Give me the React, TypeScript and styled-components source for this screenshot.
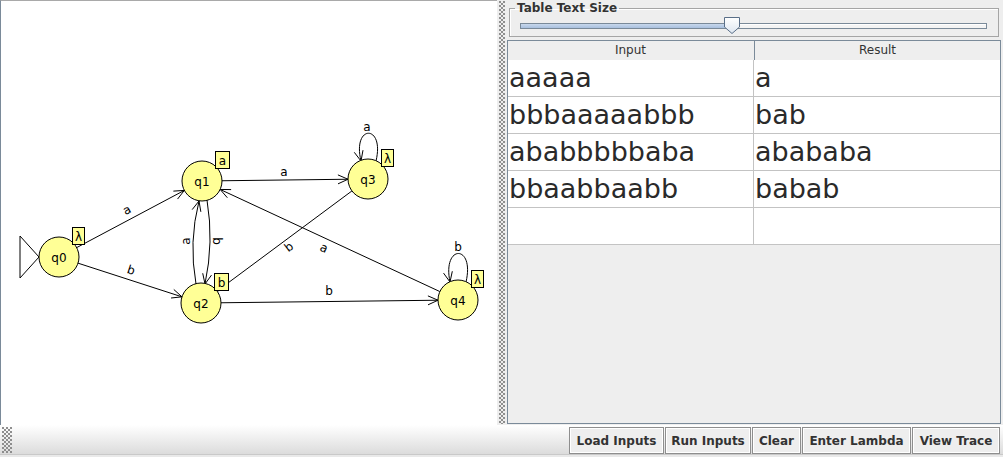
import React from 'react';
import styled, { createGlobalStyle } from 'styled-components';

const GlobalStyle = createGlobalStyle`
  html, body {
    margin: 0;
    padding: 0;
    background: #eeeeee;
  }
`;

const Window = styled.div`
  width: 1003px;
  height: 457px;
  display: flex;
  flex-direction: column;
  overflow: hidden;
  font-family: "DejaVu Sans", "Liberation Sans", sans-serif;
  color: #333333;
`;

const SplitPane = styled.div`
  display: flex;
  height: 425px;
`;

const Canvas = styled.div`
  width: 496px;
  flex: none;
  background: #ffffff;
  border-left: 1px solid #7a8a99;
  border-top: 1px solid #a9a9a9;

  svg {
    display: block;
  }
`;

const Grip = styled.div<{ $w: number }>`
  width: ${({ $w }) => $w}px;
  flex: none;
  background-image:
    radial-gradient(circle at 1px 1px, #8c8c8c 0.7px, transparent 1px),
    radial-gradient(circle at 1px 1px, #8c8c8c 0.7px, transparent 1px);
  background-size: 4px 4px;
  background-position: 0 0, 2px 2px;
`;

const Divider = styled.div`
  width: 9px;
  flex: none;
  display: flex;
  justify-content: center;
  padding: 1px 0;
  box-sizing: border-box;
`;

const RightPanel = styled.div`
  flex: 1;
  display: flex;
  flex-direction: column;
  padding: 0 2px 1px 1px;
  min-width: 0;
`;

const GroupBox = styled.fieldset`
  margin: 1px 2px 0 2px;
  padding: 0 11px 0 10px;
  border: 1px solid #a5a5a5;
  box-shadow: inset 1px 1px 0 #ffffff;
  min-width: 0;
`;

const GroupTitle = styled.legend`
  margin-left: -5px;
  padding: 0 2px;
  font-size: 12px;
  line-height: 14px;
  font-weight: bold;
  color: #333333;
`;

const Slider = styled.div`
  position: relative;
  height: 21px;
`;

const Track = styled.div`
  position: absolute;
  left: 0;
  right: 0;
  top: 8px;
  height: 4px;
  border: 1px solid #7a8a99;
  background: #f4f4f4;
  box-shadow: inset 0 1px 0 #ffffff;
`;

const TrackFill = styled.div`
  height: 100%;
  background: linear-gradient(#c8d8ec, #a9c0de);
`;

const Thumb = styled.svg`
  position: absolute;
  top: 2px;
  width: 16px;
  height: 17px;
`;

const ScrollPane = styled.div`
  margin-top: 3px;
  flex: 1;
  border: 1px solid #7a8a99;
  background: #eeeeee;
  display: flex;
  flex-direction: column;
`;

const TableRow = styled.div<{ $header?: boolean }>`
  display: grid;
  grid-template-columns: 246px 1fr;
  height: ${({ $header }) => ($header ? 19 : 37)}px;
  background: ${({ $header }) => ($header ? '#eeeeee' : '#ffffff')};
  border-bottom: ${({ $header }) => ($header ? 'none' : '1px solid #c3c3c3')};
  box-sizing: border-box;
`;

const HeaderCell = styled.div`
  font-size: 12px;
  line-height: 19px;
  text-align: center;
  color: #333333;
  & + & {
    border-left: 1px solid #7a8a99;
  }
  &:first-child {
    width: 245px;
  }
`;

const Cell = styled.div`
  font-size: 27px;
  line-height: 36px;
  padding-left: 1px;
  white-space: nowrap;
  overflow: hidden;
  color: #2a2a2a;
  &:first-child {
    border-right: 1px solid #c3c3c3;
  }
`;

const ToolBar = styled.div`
  height: 32px;
  box-sizing: border-box;
  display: flex;
  align-items: flex-start;
  gap: 1px;
  padding: 2px 3px 0 2px;
  background: linear-gradient(#ffffff, #dcdcdc 90%);
  box-shadow: inset 0 -2px 0 #e9e9e9, inset 0 -3px 0 #c9c9c9;
`;

const ToolGrip = styled(Grip)`
  height: 26px;
  margin-right: auto;
`;

const Button = styled.button<{ $w: number }>`
  width: ${({ $w }) => $w}px;
  height: 27px;
  padding: 0;
  margin: 0;
  font-family: "DejaVu Sans", "Liberation Sans", sans-serif;
  font-size: 12px;
  font-weight: bold;
  color: #333333;
  background: #eeeeee;
  border: 1px solid #8e8e8e;
  box-shadow: inset 0 0 0 1px #ffffff;
  border-radius: 0;
  white-space: nowrap;
`;

type Pt = [number, number];

const R = 20;

const states = [
  { id: 'q0', x: 59, y: 257, tag: 'λ' },
  { id: 'q1', x: 202, y: 181, tag: 'a' },
  { id: 'q2', x: 201, y: 303, tag: 'b' },
  { id: 'q3', x: 368, y: 179, tag: 'λ' },
  { id: 'q4', x: 458, y: 300, tag: 'λ' },
];

const straightEdges = [
  { from: 0, to: 1, label: 'a', lx: 127, ly: 210, rot: -28 },
  { from: 0, to: 2, label: 'b', lx: 131, ly: 270, rot: 18 },
  { from: 1, to: 3, label: 'a', lx: 284, ly: 172, rot: 0 },
  { from: 2, to: 4, label: 'b', lx: 329, ly: 291, rot: 0 },
  { from: 3, to: 2, label: 'b', lx: 289, ly: 247, rot: -37 },
  { from: 4, to: 1, label: 'a', lx: 324, ly: 248, rot: 25 },
];

// curved edges and loops: path, end point, tangent at end, label
const curvedEdges = [
  { d: 'M196 284 Q188.5 242 199 201', tip: [199, 201] as Pt, dir: [10.5, -41] as Pt, label: 'a', lx: 186, ly: 241, rot: -90 },
  { d: 'M207 200 Q214 242 205 284', tip: [205, 284] as Pt, dir: [-9, 42] as Pt, label: 'b', lx: 217, ly: 241, rot: 90 },
  { d: 'M376 161 C385 124 352 124 361 161', tip: [361, 161] as Pt, dir: [9, 37] as Pt, label: 'a', lx: 367, ly: 126.5, rot: 0 },
  { d: 'M466 282 C475 244 442 244 450 282', tip: [450, 282] as Pt, dir: [8, 38] as Pt, label: 'b', lx: 458, ly: 247, rot: 0 },
];

const arrowHead = (tip: Pt, dir: Pt) => {
  const len = Math.hypot(dir[0], dir[1]);
  const bx = -dir[0] / len;
  const by = -dir[1] / len;
  const a = 0.42;
  const L = 11;
  const c = Math.cos(a);
  const s = Math.sin(a);
  const w1 = [tip[0] + L * (bx * c - by * s), tip[1] + L * (bx * s + by * c)];
  const w2 = [tip[0] + L * (bx * c + by * s), tip[1] + L * (-bx * s + by * c)];
  return `M${w1[0]} ${w1[1]} L${tip[0]} ${tip[1]} L${w2[0]} ${w2[1]}`;
};

const EdgeLabel: React.FC<{ x: number; y: number; rot: number; text: string }> = ({ x, y, rot, text }) => (
  <text
    x={x}
    y={y}
    textAnchor="middle"
    dominantBaseline="central"
    transform={rot ? `rotate(${rot} ${x} ${y})` : undefined}
  >
    {text}
  </text>
);

const Diagram: React.FC = () => (
  <svg width={496} height={424} viewBox="1 1 496 424" fontFamily='"DejaVu Sans", sans-serif' fontSize={12}>
    <g stroke="#000" strokeWidth={1} fill="none">
      <path d="M20 236 L39 257 L20 278 Z" />
      {straightEdges.map((e, i) => {
        const a = states[e.from];
        const b = states[e.to];
        const dx = b.x - a.x;
        const dy = b.y - a.y;
        const len = Math.hypot(dx, dy);
        const ux = dx / len;
        const uy = dy / len;
        const start: Pt = [a.x + R * ux, a.y + R * uy];
        const end: Pt = [b.x - R * ux, b.y - R * uy];
        return (
          <g key={i}>
            <line x1={start[0]} y1={start[1]} x2={end[0]} y2={end[1]} />
            <path d={arrowHead(end, [dx, dy])} />
          </g>
        );
      })}
      {curvedEdges.map((e, i) => (
        <g key={i}>
          <path d={e.d} />
          <path d={arrowHead(e.tip, e.dir)} />
        </g>
      ))}
    </g>
    <g fill="#000">
      {straightEdges.map((e, i) => (
        <EdgeLabel key={i} x={e.lx} y={e.ly} rot={e.rot} text={e.label} />
      ))}
      {curvedEdges.map((e, i) => (
        <EdgeLabel key={i} x={e.lx} y={e.ly} rot={e.rot} text={e.label} />
      ))}
    </g>
    {states.map((s) => {
      const w = s.tag === 'λ' ? 12 : 14;
      return (
        <g key={s.id}>
          <circle cx={s.x} cy={s.y} r={R} fill="#ffff96" stroke="#000" />
          <text x={s.x} y={s.y + 4.5} textAnchor="middle" fill="#000">
            {s.id}
          </text>
          <rect x={s.x + 13.5} y={s.y - 29.5} width={w} height={17} fill="#ffff96" stroke="#000" />
          <text x={s.x + 13.5 + w / 2} y={s.y - 16.5} textAnchor="middle" fill="#000">
            {s.tag}
          </text>
        </g>
      );
    })}
  </svg>
);

const rows = [
  { input: 'aaaaa', result: 'a' },
  { input: 'bbbaaaaabbb', result: 'bab' },
  { input: 'ababbbbbaba', result: 'abababa' },
  { input: 'bbaabbaabb', result: 'babab' },
  { input: '', result: '' },
];

const buttons = [
  { label: 'Load Inputs', width: 95 },
  { label: 'Run Inputs', width: 86 },
  { label: 'Clear', width: 49 },
  { label: 'Enter Lambda', width: 109 },
  { label: 'View Trace', width: 88 },
];

const sizeMin = 2;
const sizeMax = 55;
const sizeValue = 26;

const App: React.FC = () => {
  const frac = (sizeValue - sizeMin) / (sizeMax - sizeMin);
  const trackWidth = 467;
  const thumbLeft = Math.round(frac * (trackWidth - 16));

  return (
    <Window>
      <GlobalStyle />
      <SplitPane>
        <Canvas>
          <Diagram />
        </Canvas>
        <Divider>
          <Grip $w={6} />
        </Divider>
        <RightPanel>
          <GroupBox>
            <GroupTitle>Table Text Size</GroupTitle>
            <Slider>
              <Track>
                <TrackFill style={{ width: thumbLeft + 8 }} />
              </Track>
              <Thumb style={{ left: thumbLeft }} viewBox="0 0 16 17">
                <defs>
                  <linearGradient id="thumbFill" x1="0" y1="0" x2="0" y2="1">
                    <stop offset="0" stopColor="#ffffff" />
                    <stop offset="1" stopColor="#dde6f0" />
                  </linearGradient>
                </defs>
                <path d="M0.5 0.5 H15.5 V10 L8 16.5 L0.5 10 Z" fill="url(#thumbFill)" stroke="#5a6f88" />
              </Thumb>
            </Slider>
          </GroupBox>
          <ScrollPane>
            <TableRow $header>
              <HeaderCell>Input</HeaderCell>
              <HeaderCell>Result</HeaderCell>
            </TableRow>
            {rows.map((r, i) => (
              <TableRow key={i}>
                <Cell>{r.input}</Cell>
                <Cell>{r.result}</Cell>
              </TableRow>
            ))}
          </ScrollPane>
        </RightPanel>
      </SplitPane>
      <ToolBar>
        <ToolGrip $w={10} />
        {buttons.map((b) => (
          <Button key={b.label} $w={b.width}>
            {b.label}
          </Button>
        ))}
      </ToolBar>
    </Window>
  );
};

export default App;
